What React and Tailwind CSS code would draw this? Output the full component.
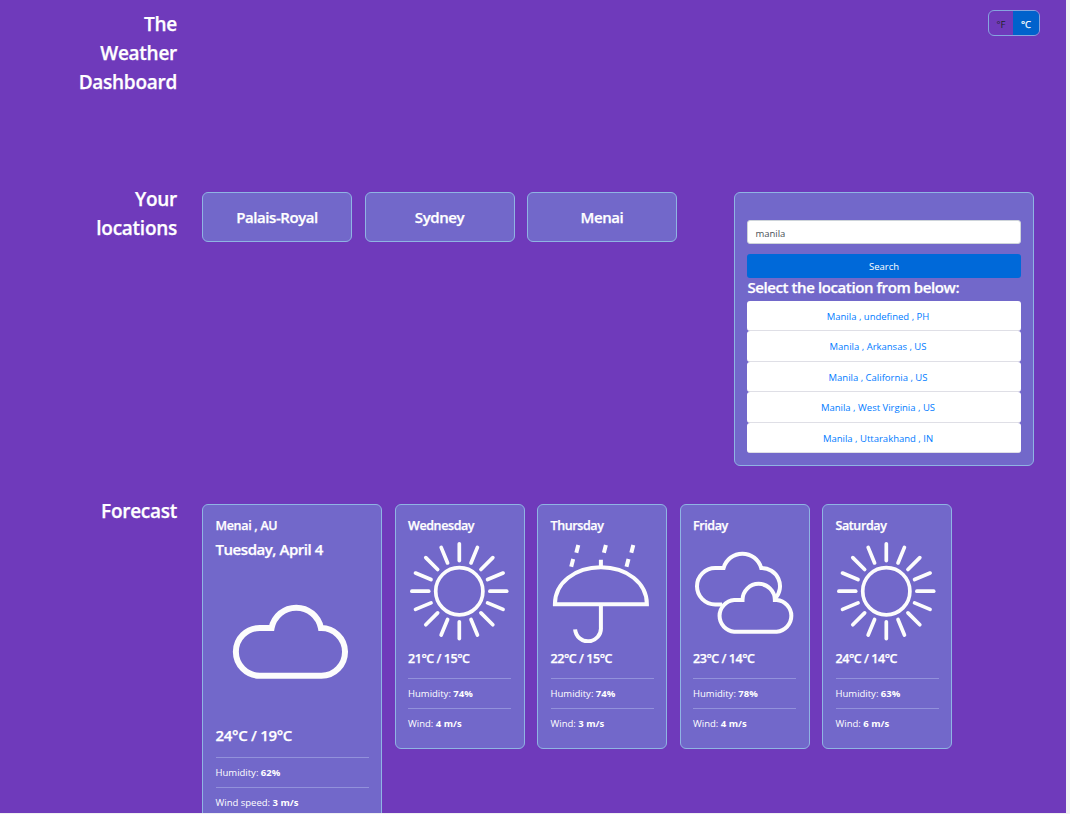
const RAYS = Array.from({ length: 16 }, (_, i) => i * 22.5);

function Sun() {
  return (
    <svg viewBox="0 0 100 100" className="ml-[0.6px] block size-[100px]" fill="none" stroke="#fcfcfc" strokeWidth="3.7" strokeLinecap="round">
      <circle cx="50.3" cy="50.2" r="23.6" />
      {RAYS.map((a) => (
        <line key={a} x1="50.3" y1="2.8" x2="50.3" y2="19.6" transform={`rotate(${a} 50.3 50.2)`} />
      ))}
    </svg>
  );
}

function Umbrella() {
  return (
    <svg viewBox="0 0 100 102" className="-mb-[2px] ml-[0.6px] block h-[102px] w-[100px]" fill="none" stroke="#fcfcfc" strokeWidth="4">
      <path d="M3.9 63.2C3.9 42 24 26.3 49.9 26.3S95.9 42 95.9 63.2Z" />
      <path d="M49.9 18.7V26M49.9 63V86.4a12.9 12.9 0 0 1 -25.8 2" />
      <path d="M27.3 4L25.3 11.7M54.9 4L52.9 11.7M82.3 4L80.3 11.7M22.2 18L20.2 25.7M77.5 18L75.5 25.7" />
    </svg>
  );
}

function Clouds() {
  return (
    <svg viewBox="0 0 102 100" className="ml-[0.6px] block h-[100px] w-[102px]" fill="none" stroke="#fcfcfc" strokeWidth="4">
      <path d="M28 63.4H21.2a18.2 18.2 0 0 1 0 -36.4H29.6A19.5 19.5 0 0 1 67.2 27A18.2 18.2 0 0 1 81.2 57.5" />
      <path d="M40.2 59H48.5A16.2 16.2 0 0 1 80.9 59H82.7A15.9 15.9 0 0 1 82.7 90.7H40.2A15.9 15.9 0 0 1 40.2 59Z" />
    </svg>
  );
}

function Cloud() {
  return (
    <svg viewBox="0.6 0 154 154" className="block size-[154px]" fill="none" stroke="#fcfcfc" strokeWidth="6">
      <path d="M44.3 63H56.2A25.1 25.1 0 0 1 105.5 63A23.85 23.85 0 0 1 106 110.7H44.3A23.85 23.85 0 0 1 44.3 63Z" />
    </svg>
  );
}

const places = ["Palais-Royal", "Sydney", "Menai"];
const results = ["Manila , undefined , PH", "Manila , Arkansas , US", "Manila , California , US", "Manila , West Virginia , US", "Manila , Uttarakhand , IN"];
const days = [
  { day: "Wednesday", Icon: Sun, temp: "21°C / 15°C", hum: "74%", wind: "4 m/s" },
  { day: "Thursday", Icon: Umbrella, temp: "22°C / 15°C", hum: "74%", wind: "3 m/s" },
  { day: "Friday", Icon: Clouds, temp: "23°C / 14°C", hum: "78%", wind: "4 m/s" },
  { day: "Saturday", Icon: Sun, temp: "24°C / 14°C", hum: "63%", wind: "6 m/s" },
];

function Side({ lines }) {
  return (
    <h2 className="w-[177px] shrink-0 text-right text-[19px] font-semibold leading-[29px] tracking-[-0.27px] [-webkit-text-stroke:0.25px_white]">
      {lines.map((l) => (
        <div key={l}>{l}</div>
      ))}
    </h2>
  );
}

function Stat({ label, value }) {
  return (
    <div className="h-[30px] border-t border-[#9291db] text-[9.5px] leading-[29px] whitespace-nowrap">
      {label} <b>{value}</b>
    </div>
  );
}

export default function App() {
  return (
    <div className="h-[814px] w-[1070px] overflow-hidden bg-[#f1f1f3]">
      <main className="h-[813px] w-[1066px] overflow-hidden bg-[#6f3abb] font-['Open_Sans','Noto_Sans',sans-serif] text-white">
        <header className="flex h-[192px] justify-between pt-[10px] pr-[26px]">
          <Side lines={["The", "Weather", "Dashboard"]} />
          <div className="flex h-[26px] w-[52px] overflow-hidden rounded-md border border-[#86a5df] text-[9.5px] leading-[27px]">
            <div className="w-[24px] text-center text-[#212529]">°F</div>
            <div className="flex-1 bg-[#0062cc] text-center [-webkit-text-stroke:0.25px_white]">°C</div>
          </div>
        </header>

        <section className="flex h-[312px]">
          <div className="-mt-[7px]"><Side lines={["Your", "locations"]} /></div>
          <div className="ml-[25px] flex w-[532px] gap-[12.5px]">
            {places.map((p) => (
              <button key={p} className="h-[50px] w-[150px] rounded-md border border-[#8fb4e3] bg-[#7268ca] text-[15px] font-semibold tracking-[-0.42px] [-webkit-text-stroke:0.25px_white]">{p}</button>
            ))}
          </div>
          <div className="h-[274px] w-[300px] rounded-md border border-[#8fb4e3] bg-[#7268ca] px-[12.4px] pt-[27.4px]">
            <div className="h-[24px] rounded-[3px] border border-[#ced4da] bg-white px-[7px] text-[9.5px] leading-[26px] text-[#495057]">manila</div>
            <button className="mt-[9.6px] block h-[24px] w-full rounded-[3px] bg-[#0069d9] pt-[2px] text-[9.5px]">Search</button>
            <h3 className="h-[23px] text-[15px] font-semibold leading-[19px] tracking-[-0.4px] whitespace-nowrap [-webkit-text-stroke:0.25px_white]">Select the location from below:</h3>
            <ul>
              {results.map((r) => (
                <li key={r} className="h-[30.4px] rounded-[3px] border-b border-[#dfdfe6] bg-white pr-[12px] text-center text-[9.5px] leading-[31.6px] text-[#007bff]">{r}</li>
              ))}
            </ul>
          </div>
        </section>

        <section className="flex items-start">
          <div className="-mt-[7px]"><Side lines={["Forecast"]} /></div>
          <div className="ml-[25px] flex items-start gap-[12.5px]">
            <article className="h-[330px] w-[180px] rounded-md border border-[#8fb4e3] bg-[#7268ca] px-[12.5px] pt-[10px]">
              <div className="h-[22px] text-[12.5px] font-semibold leading-[21px] tracking-[-0.3px] [-webkit-text-stroke:0.25px_white]">Menai , AU</div>
              <div className="h-[28px] text-[15px] font-semibold leading-[25px] tracking-[-0.45px] [-webkit-text-stroke:0.25px_white]">Tuesday, April 4</div>
              <Cloud />
              <div className="h-[37.5px] pt-[6px] text-[15px] font-semibold leading-[20px] tracking-[-0.3px] [-webkit-text-stroke:0.25px_white]">24°C / 19°C</div>
              <Stat label="Humidity:" value="62%" />
              <Stat label="Wind speed:" value="3 m/s" />
            </article>
            {days.map(({ day, Icon, temp, hum, wind }) => (
              <article key={day} className="h-[245px] w-[130px] rounded-md border border-[#8fb4e3] bg-[#7268ca] px-[12.5px] pt-[10px]">
                <div className="h-[26px] text-[12.5px] font-semibold leading-[21px] tracking-[-0.4px] [-webkit-text-stroke:0.25px_white]">{day}</div>
                <Icon />
                <div className="h-[37px] pt-[7px] text-[12.5px] font-semibold leading-[22px] tracking-[-0.45px] [-webkit-text-stroke:0.25px_white]">{temp}</div>
                <Stat label="Humidity:" value={hum} />
                <Stat label="Wind:" value={wind} />
              </article>
            ))}
          </div>
        </section>
      </main>
    </div>
  );
}
